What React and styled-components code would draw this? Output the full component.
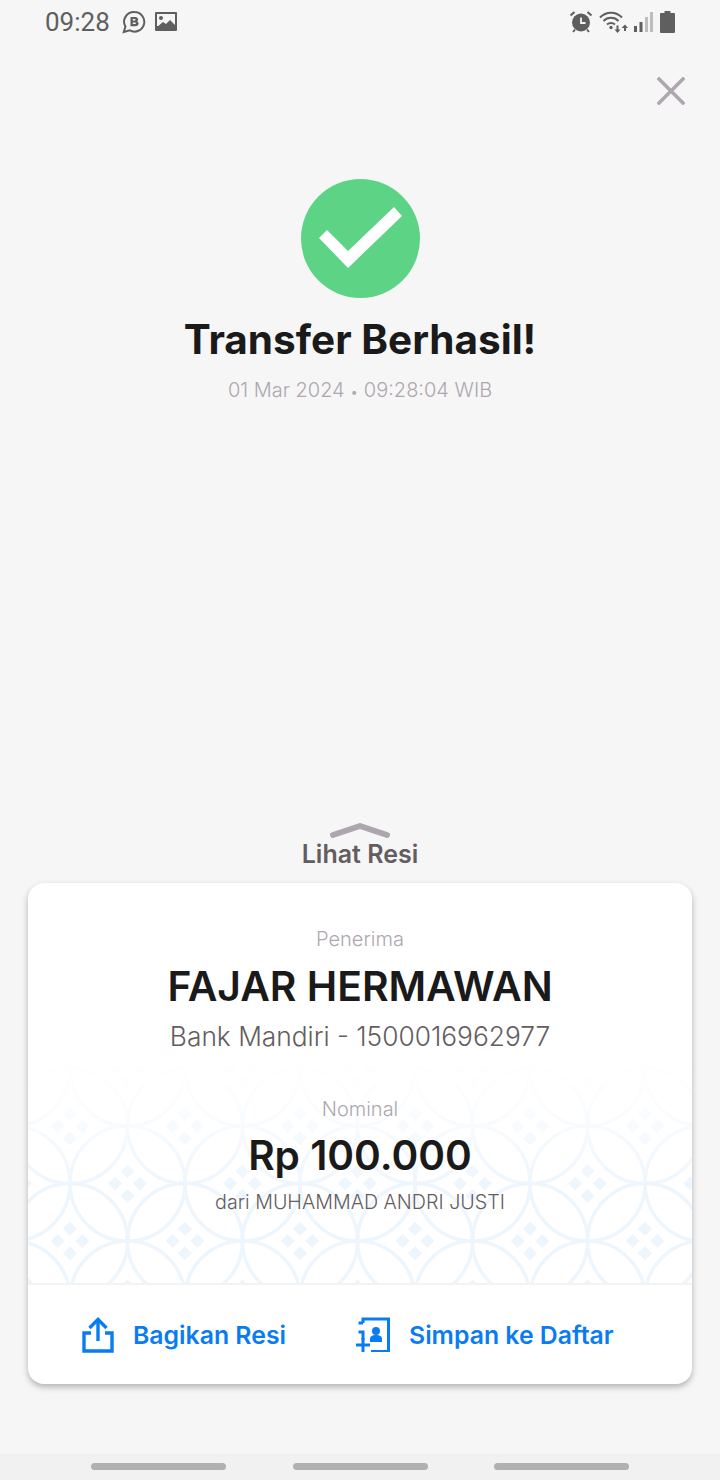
import * as React from "react";
import styled, { createGlobalStyle } from "styled-components";

const GlobalStyle = createGlobalStyle`
  html, body {
    margin: 0;
    padding: 0;
    background: #f6f6f6;
  }
  * {
    box-sizing: border-box;
  }
`;

const BusinessIcon = () =>
  <svg width="24" height="24" viewBox="0 0 24 24">
    <path d="M12.500 2a9.800 9.800 0 1 1-4.700 18.400L1.800 22l1.600-5.400A9.800 9.800 0 0 1 12.500 2z" fill="none" stroke="#5f5f5f" strokeWidth="2" />
    <path d="M8.500 7h4.700c1.800 0 2.900 1 2.900 2.400 0 .9-.5 1.600-1.200 1.900 1 .3 1.700 1.100 1.700 2.200 0 1.600-1.200 2.700-3.200 2.700H8.500zm2.300 2v1.600h1.800c.6 0 1-.3 1-.8s-.4-.8-1-.8zm0 3.400v1.700h2c.7 0 1.100-.3 1.100-.9s-.4-.8-1.100-.8z" fill="#5f5f5f" fillRule="evenodd" />
  </svg>;

const PictureIcon = () =>
  <svg width="24" height="24" viewBox="0 0 24 24">
    <path d="M3 2h19a1 1 0 0 1 1 1v17a1 1 0 0 1-1 1H2a1 1 0 0 1-1-1V3a1 1 0 0 1 1-1z" fill="#5f5f5f" />
    <rect x="3" y="4" width="18" height="12" fill="#f6f6f6" />
    <circle cx="7" cy="8" r="2" fill="#5f5f5f" />
    <path d="M3 17l6-5 3 2 4-4 5 5v3H3z" fill="#5f5f5f" />
  </svg>;

const AlarmIcon = () =>
  <svg width="24" height="24" viewBox="0 0 24 24">
    <circle cx="12" cy="12.500" r="9" fill="#5f5f5f" />
    <path d="M12 7.500v5.500h4.500" fill="none" stroke="#f6f6f6" strokeWidth="1.800" />
    <path d="M1.500 5.500L5.500 2M22.500 5.500L18.500 2M4 22l2-2.500M20 22l-2-2.500" fill="none" stroke="#5f5f5f" strokeWidth="2" />
  </svg>;

const WifiIcon = () =>
  <svg width="29" height="24" viewBox="0 0 29 24">
    <g fill="none" stroke="#5f5f5f" strokeWidth="2">
      <path d="M1 7.500C7 1 17 1 23 7.500" />
      <path d="M4.500 11C8.500 6.800 15.500 6.800 19.500 11" />
      <path d="M8 14.500c2.200-2 5.800-2 8 0" />
      <path d="M18.500 15.500v5M26 21v-5" />
    </g>
    <circle cx="12" cy="17.500" r="1.700" fill="#5f5f5f" />
    <path d="M15.500 19.500h6l-3 3.500zM22.500 18l3.500-3.500 3 3.500z" fill="#5f5f5f" />
  </svg>;

const SignalIcon = () =>
  <svg width="20" height="22" viewBox="0 0 20 22">
    <rect x="0" y="15" width="3" height="6" fill="#5f5f5f" />
    <rect x="5.500" y="11" width="3" height="10" fill="#5f5f5f" />
    <rect x="11" y="6" width="3" height="15" fill="#bdbdbd" />
    <rect x="16" y="1" width="3" height="20" fill="#bdbdbd" />
  </svg>;

const BatteryIcon = () =>
  <svg width="15" height="22" viewBox="0 0 15 22">
    <path d="M4.500 0h6v2H14a1 1 0 0 1 1 1v18a1 1 0 0 1-1 1H1a1 1 0 0 1-1-1V3a1 1 0 0 1 1-1h3.500z" fill="#5f5f5f" />
  </svg>;

const CloseIcon = () =>
  <svg width="28" height="28" viewBox="0 0 28 28">
    <path d="M2 2l24 24M26 2L2 26" fill="none" stroke="#aea7af" strokeWidth="3.600" strokeLinecap="square" />
  </svg>;

const SuccessIcon = () =>
  <svg width="119" height="119" viewBox="301 179 119 119">
    <circle cx="360.500" cy="238.500" r="59.500" fill="#5dd385" />
    <path d="M319 238l8-8 21 21 46-44 8 9-54 52z" fill="#ffffff" />
  </svg>;

const ChevronIcon = () =>
  <svg width="60" height="16" viewBox="0 0 60 16">
    <path d="M3 12L30 3l27 9" fill="none" stroke="#aea6af" strokeWidth="6" strokeLinecap="round" strokeLinejoin="round" />
  </svg>;

const ShareIcon = () =>
  <svg width="32" height="36" viewBox="0 0 32 36">
    <g fill="none" stroke="#0a7cf2" strokeWidth="3.400">
      <path d="M9 16H2v18h28V16h-7" />
      <path d="M16 24V3" />
      <path d="M7.500 11L16 2.500 24.500 11" />
    </g>
  </svg>;

const ContactIcon = () =>
  <svg width="34" height="35" viewBox="0 0 34 35">
    <g fill="none" stroke="#0a7cf2" strokeWidth="3">
      <path d="M7 6V2h25.500v32.500H15" />
      <path d="M7 6H2.500M2.500 15H7v8" />
      <path d="M0 28h14M7 21v14" />
    </g>
    <circle cx="20" cy="14" r="4" fill="#0a7cf2" />
    <path d="M14 25v-3c0-3 2.500-4 6-4s6 1 6 4v3z" fill="#0a7cf2" />
  </svg>;

// four little diamonds that sit in the middle of each star
const Diamonds = ({ x, y }) =>
  <g transform={`translate(${x} ${y}) rotate(45)`} fill="#edf5fd">
    <rect x="-13.700" y="-13.700" width="10" height="10" />
    <rect x="3.700" y="-13.700" width="10" height="10" />
    <rect x="-13.700" y="3.700" width="10" height="10" />
    <rect x="3.700" y="3.700" width="10" height="10" />
  </g>;

const BatikPattern = () =>
  <PatternSvg width="664" height="225">
    <defs>
      <pattern id="batik" width="115" height="115" patternUnits="userSpaceOnUse" patternTransform="translate(42 68)">
        <g fill="none" stroke="#edf5fd" strokeWidth="3.500">
          <circle cx="0" cy="0" r="57.500" />
          <circle cx="115" cy="0" r="57.500" />
          <circle cx="0" cy="115" r="57.500" />
          <circle cx="115" cy="115" r="57.500" />
          <circle cx="57.500" cy="57.500" r="57.500" />
        </g>
        <Diamonds x={0} y={0} />
        <Diamonds x={115} y={0} />
        <Diamonds x={0} y={115} />
        <Diamonds x={115} y={115} />
        <Diamonds x={57.5} y={57.5} />
      </pattern>
    </defs>
    <rect width="664" height="225" fill="url(#batik)" />
  </PatternSvg>;

export default function App() {
  return (
    <Page>
      <GlobalStyle />
      <StatusBar>
        <StatusGroup>
          <Clock>09:28</Clock>
          <BusinessIcon />
          <PictureIcon />
        </StatusGroup>
        <StatusGroup $gap={6}>
          <AlarmIcon />
          <WifiIcon />
          <SignalIcon />
          <BatteryIcon />
        </StatusGroup>
      </StatusBar>

      <CloseRow>
        <CloseIcon />
      </CloseRow>

      <Hero>
        <SuccessIcon />
        <Title>Transfer Berhasil!</Title>
        <Timestamp>01 Mar 2024 <Dot>•</Dot> 09:28:04 WIB</Timestamp>
      </Hero>

      <Content>
        <ReceiptToggle>
          <ChevronIcon />
          <ToggleLabel>Lihat Resi</ToggleLabel>
        </ReceiptToggle>

        <Card>
          <CardBody>
            <BatikPattern />
            <Caption>Penerima</Caption>
            <Name>FAJAR HERMAWAN</Name>
            <Account>Bank Mandiri - 1500016962977</Account>
            <NominalCaption>Nominal</NominalCaption>
            <Amount>Rp 100.000</Amount>
            <Sender>dari MUHAMMAD ANDRI JUSTI</Sender>
          </CardBody>
          <CardActions>
            <ActionButton>
              <ShareIcon />
              Bagikan Resi
            </ActionButton>
            <ActionButton>
              <ContactIcon />
              Simpan ke Daftar
            </ActionButton>
          </CardActions>
        </Card>
      </Content>

      <NavBar>
        <NavPill />
        <NavPill />
        <NavPill />
      </NavBar>
    </Page>
  );
}

const Page = styled.div`
  width: 720px;
  height: 1480px;
  display: flex;
  flex-direction: column;
  overflow: hidden;
  background: #f6f6f6;
  font-family: Inter, "Liberation Sans", sans-serif;
`;

const StatusBar = styled.div`
  height: 44px;
  display: flex;
  align-items: center;
  justify-content: space-between;
  padding: 0 45px 0 45px;
`;

const StatusGroup = styled.div`
  display: flex;
  align-items: center;
  gap: ${props => props.$gap || 8}px;
`;

const Clock = styled.span`
  font-family: Roboto, sans-serif;
  font-size: 26px;
  color: #5f5f5f;
  margin-right: 4px;
`;

const CloseRow = styled.div`
  display: flex;
  justify-content: flex-end;
  padding: 33px 35px 0 0;
`;

const Hero = styled.div`
  display: flex;
  flex-direction: column;
  align-items: center;
  padding-top: 74px;
`;

const Title = styled.h1`
  margin: 18px 0 0;
  font-size: 40.5px;
  line-height: 48px;
  font-weight: 700;
  color: #1a1a1a;
`;

const Timestamp = styled.div`
  margin-top: 13px;
  font-size: 20px;
  line-height: 26px;
  font-weight: 300;
  color: #aea7af;
`;

const Dot = styled.span`
  font-size: 14px;
`;

const Content = styled.div`
  flex: 1;
  display: flex;
  flex-direction: column;
  justify-content: flex-end;
  padding: 0 28px 70px;
`;

const ReceiptToggle = styled.div`
  display: flex;
  flex-direction: column;
  align-items: center;
  margin-bottom: 14px;
`;

const ToggleLabel = styled.div`
  font-size: 25px;
  line-height: 30px;
  font-weight: 600;
  color: #635d60;
`;

const Card = styled.div`
  height: 501px;
  display: flex;
  flex-direction: column;
  background: #ffffff;
  border-radius: 16px;
  box-shadow: 0 3px 6px rgba(0, 0, 0, 0.28);
  overflow: hidden;
`;

const CardBody = styled.div`
  position: relative;
  flex: 1;
  display: flex;
  flex-direction: column;
  align-items: center;
  padding-top: 43px;
  text-align: center;
  border-bottom: 2px solid #f3f3f3;
`;

const PatternSvg = styled.svg`
  position: absolute;
  left: 0;
  bottom: 0;
  mask-image: linear-gradient(to bottom, transparent 0, rgba(0, 0, 0, 0.3) 25%, #000 60%);
`;

const Caption = styled.div`
  position: relative;
  font-size: 20px;
  line-height: 26px;
  font-weight: 300;
  color: #aea7af;
`;

const NominalCaption = styled(Caption)`
  margin-top: 42px;
`;

const Name = styled.div`
  position: relative;
  margin-top: 10px;
  font-size: 40.8px;
  line-height: 48px;
  font-weight: 600;
  color: #1a1a1a;
`;

const Account = styled.div`
  position: relative;
  margin-top: 10px;
  font-size: 26.3px;
  line-height: 34px;
  font-weight: 300;
  color: #635d60;
`;

const Amount = styled.div`
  position: relative;
  margin-top: 10px;
  font-size: 40.6px;
  line-height: 48px;
  font-weight: 600;
  color: #1a1a1a;
`;

const Sender = styled.div`
  position: relative;
  margin-top: 9px;
  font-size: 19.7px;
  line-height: 26px;
  font-weight: 300;
  color: #635d60;
`;

const CardActions = styled.div`
  height: 99px;
  display: flex;
  align-items: center;
  gap: 70px;
  padding-left: 54px;
`;

const ActionButton = styled.div`
  display: flex;
  align-items: center;
  gap: 19px;
  font-size: 24.8px;
  font-weight: 600;
  color: #0a7cf2;
`;

const NavBar = styled.div`
  height: 26px;
  display: flex;
  justify-content: space-between;
  padding: 9px 91px 0;
  background: #f1f1f1;
`;

const NavPill = styled.div`
  width: 135px;
  height: 7px;
  border-radius: 4px;
  background: #b1b1b1;
`;
